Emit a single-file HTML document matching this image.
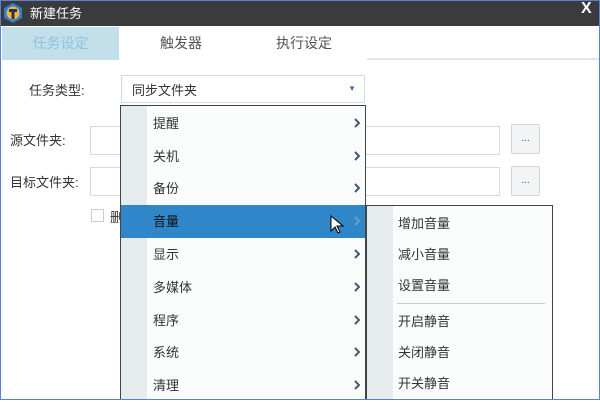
<!DOCTYPE html>
<html><head><meta charset="utf-8"><style>
*{margin:0;padding:0;box-sizing:border-box}
body{width:600px;height:400px;overflow:hidden;background:#fff;font-family:"Liberation Sans","Noto Sans CJK SC",sans-serif;font-size:13px;color:#333;position:relative}
.a{position:absolute}
.win{left:0;top:0;width:600px;height:400px;border:1px solid #5a80d0}
.title{left:0;top:0;width:600px;height:26px;background:#3b3b3b;color:#fff;font-size:13px}
.inp{background:#fff;border:1px solid #cfdde3}
.btn{background:#f2f4f5;border:1px solid #cfd6da;border-radius:2px;text-align:center;font-size:10px;color:#444}
.mi{position:absolute;left:0;width:100%;height:33px;line-height:33px;font-size:13px;color:#333}
.arr{position:absolute;left:233px;top:11px}
</style></head><body>
<div class="a title">
 <svg class="a" style="left:2px;top:2px" width="22" height="22" viewBox="0 0 20 22"><polygon points="10,1 19,6 19,16 10,21 1,16 1,6" fill="#2a7fd0"/><circle cx="10" cy="11" r="6.5" fill="#f3b24a"/><path d="M6,7h8v3h-2.5v7h-3v-7H6z" fill="#333"/></svg>
 <div class="a" style="left:30px;top:3px">新建任务</div>
 <div class="a" style="left:581px;top:0px;font-weight:bold;font-size:16px">X</div>
</div>
<div class="a" style="left:2px;top:27px;width:117px;height:33px;background:#c3dfea;color:#8ec4e2;font-size:14px;line-height:33px;text-align:center">任务设定</div>
<div class="a" style="left:160px;top:27px;font-size:14px;line-height:33px;color:#555">触发器</div>
<div class="a" style="left:276px;top:27px;font-size:14px;line-height:33px;color:#555">执行设定</div>
<div class="a" style="left:367px;top:58px;width:232px;height:2px;background:#e2e6e8"></div>
<div class="a" style="left:29px;top:80px">任务类型:</div>
<div class="a inp" style="left:121px;top:75px;width:244px;height:28px"><span class="a" style="left:10px;top:4px">同步文件夹</span><span class="a" style="right:8px;top:8px;color:#3a6fb0;font-size:8px">▼</span></div>
<div class="a" style="left:10px;top:130px">源文件夹:</div>
<div class="a inp" style="left:90px;top:126px;width:410px;height:29px"></div>
<div class="a btn" style="left:511px;top:124px;width:29px;height:30px;line-height:28px">...</div>
<div class="a" style="left:10px;top:172px">目标文件夹:</div>
<div class="a inp" style="left:90px;top:167px;width:410px;height:29px"></div>
<div class="a btn" style="left:511px;top:166px;width:29px;height:30px;line-height:28px">...</div>
<div class="a" style="left:91px;top:209px;width:13px;height:13px;border:1px solid #ccc"></div>
<div class="a" style="left:110px;top:207px">删</div>
<div class="a" style="left:120px;top:105px;width:246px;height:295px;background:#fbfcfc;border:1px solid #444;border-bottom:none">
 <div class="a" style="left:0;top:0;width:26px;height:100%;background:#e6ebee"></div>
 <div class="mi" style="top:1px"><span class="a" style="left:32px">提醒</span><svg class="arr" width="6" height="10"><path d="M1,1l4,4-4,4" stroke="#3f5a73" stroke-width="2" fill="none"/></svg></div>
 <div class="mi" style="top:34px"><span class="a" style="left:32px">关机</span><svg class="arr" width="6" height="10"><path d="M1,1l4,4-4,4" stroke="#3f5a73" stroke-width="2" fill="none"/></svg></div>
 <div class="mi" style="top:66px"><span class="a" style="left:32px">备份</span><svg class="arr" width="6" height="10"><path d="M1,1l4,4-4,4" stroke="#3f5a73" stroke-width="2" fill="none"/></svg></div>
 <div class="mi" style="top:99px;background:#2f86c9;color:#111;left:0"><span class="a" style="left:32px">音量</span><svg class="arr" width="6" height="10"><path d="M1,1l4,4-4,4" stroke="#6aa0cc" stroke-width="2" fill="none"/></svg>
  <svg class="a" style="left:209px;top:10px" width="14" height="20" viewBox="0 0 14 20"><path d="M1,1v15l4-4 3,6 2-1-3-6h6z" fill="#fff" stroke="#000"/></svg></div>
 <div class="mi" style="top:132px"><span class="a" style="left:32px">显示</span><svg class="arr" width="6" height="10"><path d="M1,1l4,4-4,4" stroke="#3f5a73" stroke-width="2" fill="none"/></svg></div>
 <div class="mi" style="top:165px"><span class="a" style="left:32px">多媒体</span><svg class="arr" width="6" height="10"><path d="M1,1l4,4-4,4" stroke="#3f5a73" stroke-width="2" fill="none"/></svg></div>
 <div class="mi" style="top:198px"><span class="a" style="left:32px">程序</span><svg class="arr" width="6" height="10"><path d="M1,1l4,4-4,4" stroke="#3f5a73" stroke-width="2" fill="none"/></svg></div>
 <div class="mi" style="top:230px"><span class="a" style="left:32px">系统</span><svg class="arr" width="6" height="10"><path d="M1,1l4,4-4,4" stroke="#3f5a73" stroke-width="2" fill="none"/></svg></div>
 <div class="mi" style="top:263px"><span class="a" style="left:32px">清理</span><svg class="arr" width="6" height="10"><path d="M1,1l4,4-4,4" stroke="#3f5a73" stroke-width="2" fill="none"/></svg></div>
</div>
<div class="a" style="left:366px;top:205px;width:187px;height:195px;background:#fbfcfc;border:1px solid #444;border-bottom:none">
 <div class="a" style="left:0;top:0;width:26px;height:100%;background:#e6ebee"></div>
 <div class="mi" style="top:1px"><span class="a" style="left:31px">增加音量</span></div>
 <div class="mi" style="top:32px"><span class="a" style="left:31px">减小音量</span></div>
 <div class="mi" style="top:63px"><span class="a" style="left:31px">设置音量</span></div>
 <div class="a" style="left:30px;top:97px;width:148px;height:1px;background:#ccc"></div>
 <div class="mi" style="top:99px"><span class="a" style="left:31px">开启静音</span></div>
 <div class="mi" style="top:130px"><span class="a" style="left:31px">关闭静音</span></div>
 <div class="mi" style="top:161px"><span class="a" style="left:31px">开关静音</span></div>
</div>
<div class="a win"></div>
</body></html>
